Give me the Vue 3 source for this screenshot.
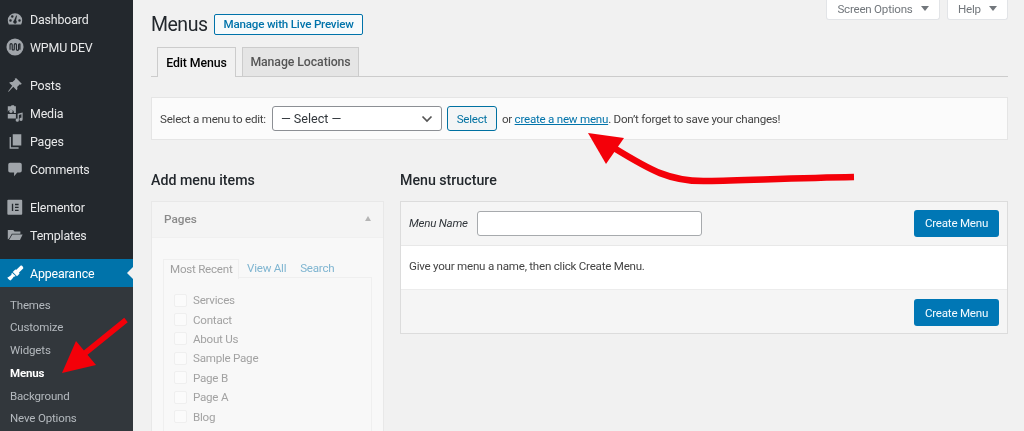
<script setup>
const groups = [
  [
    { label: 'Dashboard', d: 'M10 3.500a8 8 0 0 0-8 8c0 1.700.4 3.100 1.200 4.500h13.600c.8-1.400 1.200-2.800 1.200-4.500a8 8 0 0 0-8-8zM5 13a1.400 1.400 0 1 1 0-2.800A1.400 1.400 0 0 1 5 13zm2-4.300a1.400 1.400 0 1 1 0-2.800 1.400 1.400 0 0 1 0 2.800zM10 15.200a2.100 2.100 0 0 1-1-3.900L11.300 6l.9.300-1 5.200a2.100 2.100 0 0 1-1.200 3.700zm5-2.200a1.400 1.400 0 1 1 0-2.800 1.400 1.400 0 0 1 0 2.800z' },
    { label: 'WPMU DEV', wpmu: true }
  ],
  [
    { label: 'Posts', d: 'M11.500 2.500l6 6-1.200 1.200-.9-.5-3 3c.5 1.400.3 2.800-.6 3.700L8.100 12 3 17.500l-.7-.2L6.900 10.800 3.500 7.400c.9-.9 2.300-1.100 3.700-.6l3-3-.5-.9z' },
    { label: 'Media', d: 'M2 2.500h3.500l.7-1h2.600l.7 1h1.500v7.500H8.800a3.400 3.400 0 1 0-6.800-.5zM5.500 6a2 2 0 1 1 0 4 2 2 0 0 1 0-4zM18.500 9.500v7.500a1.800 1.800 0 1 1-1.400-1.700V11.500l-2.800.8v5.700a1.800 1.800 0 1 1-1.400-1.700V10.800zM2 11h9v5H2z' },
    { label: 'Pages', d: 'M7.500 2.500h9.500V15H7.500zM5.500 5.500V17H14v1.500H4V5.500z' },
    { label: 'Comments', d: 'M4.500 3h11a2 2 0 0 1 2 2v7a2 2 0 0 1-2 2h-3L9 18v-4H4.500a2 2 0 0 1-2-2V5a2 2 0 0 1 2-2z' }
  ],
  [
    { label: 'Elementor', elementor: true },
    { label: 'Templates', d: 'M2 4.500h6l1.500 1.500h6.500v2.500H6.500L3.500 14 2 15zM7 9.500h11.500l-3 6H3.500z' }
  ]
]
const submenu = ['Themes', 'Customize', 'Widgets', 'Menus', 'Background', 'Neve Options']
const pages = ['Services', 'Contact', 'About Us', 'Sample Page', 'Page B', 'Page A', 'Blog']
</script>

<template>
  <div class="page">
    <aside class="sidebar">
      <ul v-for="(group, g) in groups" :key="g" class="nav-group">
        <li v-for="item in group" :key="item.label" class="nav-item">
          <svg class="nav-icon" viewBox="0 0 20 20">
            <template v-if="item.wpmu">
              <circle cx="10" cy="10" r="9.500" fill="#a0a5aa" />
              <path d="M4.500 13V7.500a1.200 1.200 0 0 1 2.400 0v5a1.200 1.200 0 0 0 2.300 0v-5a1.200 1.200 0 0 1 2.400 0v5a1.200 1.200 0 0 0 2.400 0V7.500a1 1 0 0 1 1.500-.8V13" fill="none" stroke="#23282d" stroke-width="1.300" />
            </template>
            <template v-else-if="item.elementor">
              <rect x="1.500" y="2" width="16.500" height="16.500" rx="1" fill="#a0a5aa" />
              <path d="M6.500 6.500h1.500v8H6.500zM10 6.500h4V8h-4zM10 9.700h4v1.500h-4zM10 13h4v1.500h-4z" fill="#23282d" />
            </template>
            <path v-else :d="item.d" fill="#a0a5aa" fill-rule="evenodd" />
          </svg>
          <span>{{ item.label }}</span>
        </li>
      </ul>
      <div class="nav-item active">
        <svg class="nav-icon" viewBox="0 0 20 20">
          <path d="M19 3.500c-.6-1.400-1.900-2.100-2.900-1.600L11.500 6.500 10.300 6 7.500 8.800l4.700 4.700L15 10.700l-.5-1.200 4.600-4.600c.2-.3.100-1-.1-1.400zM6.700 9.800c-.5.500-.8 1.400-.7 2.200-1 1-2.700 2.600-4.500 3 .7 1.500 2 2.700 3.500 3.300 1.700-1.400 3-3 3.500-4.200.8.100 1.700-.2 2.200-.7z" fill="#fff" />
        </svg>
        <span>Appearance</span>
        <i class="notch"></i>
      </div>
      <ul class="submenu">
        <li v-for="s in submenu" :key="s" :class="{ current: s === 'Menus' }">{{ s }}</li>
      </ul>
    </aside>

    <main class="main">
      <header class="head">
        <h1>Menus</h1>
        <a class="outline-btn">Manage with Live Preview</a>
        <div class="screen-links">
          <span class="screen-tab opts">Screen Options<i class="down"></i></span>
          <span class="screen-tab help">Help<i class="down"></i></span>
        </div>
      </header>

      <nav class="tabs">
        <span class="tab on">Edit Menus</span>
        <span class="tab">Manage Locations</span>
      </nav>

      <section class="select-bar">
        <span>Select a menu to edit:</span>
        <div class="fake-select">
          <span>— Select —</span>
          <svg width="12" height="8" viewBox="0 0 12 8"><path d="M1.500 1.500L6 6l4.500-4.500" fill="none" stroke="#555" stroke-width="1.700" /></svg>
        </div>
        <span class="select-btn">Select</span>
        <span class="note">or <a>create a new menu</a>. Don’t forget to save your changes!</span>
      </section>

      <div class="columns">
        <section class="left">
          <h2>Add menu items</h2>
          <div class="panel">
            <div class="panel-head"><span>Pages</span><i class="up"></i></div>
            <div class="panel-body">
              <div class="mini-tabs">
                <span class="mini on">Most Recent</span>
                <span class="mini">View All</span>
                <span class="mini">Search</span>
              </div>
              <ul class="checks">
                <li v-for="p in pages" :key="p"><i class="box"></i>{{ p }}</li>
              </ul>
            </div>
          </div>
        </section>

        <section class="right">
          <h2>Menu structure</h2>
          <div class="menu-card">
            <div class="card-row top">
              <em>Menu Name</em>
              <div class="name-input"></div>
              <span class="primary">Create Menu</span>
            </div>
            <div class="card-mid">Give your menu a name, then click Create Menu.</div>
            <div class="card-row bottom">
              <span class="primary">Create Menu</span>
            </div>
          </div>
        </section>
      </div>
    </main>

    <svg class="arrows" width="1024" height="431" viewBox="0 0 1024 431">
      <path d="M854 177C800 178 750 180 707 181C670 182 650 170 614 148" fill="none" stroke="#f40009" stroke-width="6.500" />
      <path d="M588 133L624 138L606 164z" fill="#f40009" />
      <path d="M126 320L84 354" fill="none" stroke="#f40009" stroke-width="5.500" />
      <path d="M62 373L76 341L96 365z" fill="#f40009" />
    </svg>
  </div>
</template>

<style>
html, body { margin: 0; padding: 0; background: #f1f1f1; }
</style>

<style scoped>
* { box-sizing: border-box; }
.page {
  position: relative;
  display: flex;
  width: 1024px;
  height: 431px;
  overflow: hidden;
  background: #f1f1f1;
  color: #444;
  font-family: Roboto, "Liberation Sans", sans-serif;
  font-size: 11.600px;
  letter-spacing: -0.24px;
  white-space: nowrap;
  filter: blur(0.35px);
}
ul { list-style: none; margin: 0; padding: 0; }
h1, h2 { margin: 0; font-weight: 400; }

.sidebar {
  flex: 0 0 133px;
  padding-top: 5px;
  background: #23282d;
  color: #e8e9ea;
  font-size: 12.400px;
  letter-spacing: -0.15px;
}
.nav-group { margin-bottom: 10px; }
.nav-group:last-of-type { margin-bottom: 9.500px; }
.nav-item {
  position: relative;
  display: flex;
  align-items: center;
  height: 28px;
  padding-left: 6px;
}
.nav-item span { margin-left: 6px; padding-top: 1px; }
.nav-icon { flex: none; width: 18px; height: 18px; }
.active { background: #0073aa; color: #fff; }
.notch {
  position: absolute;
  right: 0;
  top: 8px;
  border: 6px solid transparent;
  border-right-color: #f1f1f1;
  border-left-width: 0;
}
.submenu {
  height: 145px;
  padding-top: 6.500px;
  background: #32373c;
  color: #b4b9be;
  font-size: 11.500px;
  letter-spacing: -0.15px;
}
.submenu li { height: 22.800px; padding-left: 10px; line-height: 22.800px; }
.submenu .current { color: #fff; font-weight: 700; }

.main { flex: 1; min-width: 0; padding: 0 16px 0 18px; }
.head { display: flex; align-items: flex-start; height: 47px; }
h1 { margin-top: 12px; font-size: 19.500px; letter-spacing: -0.5px; line-height: 26px; color: #23282d; }
.outline-btn {
  margin: 14px 0 0 7px;
  padding: 0 8px;
  height: 21px;
  line-height: 19px;
  border: 1px solid #0073aa;
  border-radius: 2px;
  background: #f7fafb;
  color: #0073aa;
  font-weight: 500;
  font-size: 11.600px;
  letter-spacing: -0.18px;
}
.screen-links { display: flex; gap: 7px; margin-left: auto; }
.screen-tab {
  display: flex;
  align-items: center;
  justify-content: center;
  height: 20px;
  padding-bottom: 1px;
  background: #fff;
  border: 1px solid #e2e4e7;
  border-top: 0;
  border-radius: 0 0 3px 3px;
  color: #72777c;
}
.opts { width: 114px; }
.help { width: 61px; }
.down {
  margin: -2px 0 0 8px;
  border: 4px solid transparent;
  border-top: 5px solid #72777c;
  border-bottom: 0;
}

.tabs {
  display: flex;
  align-items: flex-end;
  height: 30px;
  padding-left: 6px;
  gap: 6px;
  border-bottom: 1px solid #ccc;
}
.tab {
  display: flex;
  align-items: center;
  justify-content: center;
  height: 29px;
  width: 117px;
  background: #e5e5e5;
  border: 1px solid #ccc;
  border-bottom: 0;
  color: #555;
  font-weight: 500;
  font-size: 12.300px;
  letter-spacing: -0.08px;
}
.tab.on {
  width: 79px;
  height: 30px;
  margin-bottom: -1px;
  background: #f1f1f1;
  color: #000;
}

.select-bar {
  display: flex;
  align-items: center;
  height: 43px;
  margin-top: 20px;
  padding-left: 8px;
  background: #fbfbfb;
  border: 1px solid #e5e5e5;
  color: #444;
}
.fake-select {
  display: flex;
  align-items: center;
  justify-content: space-between;
  width: 170px;
  height: 25px;
  margin-left: 6px;
  padding: 0 8px;
  background: #fff;
  border: 1px solid #8c8f94;
  border-radius: 3px;
  color: #32373c;
  font-size: 12.600px;
  letter-spacing: 0;
}
.select-btn {
  display: flex;
  align-items: center;
  justify-content: center;
  width: 50px;
  height: 25px;
  margin-left: 5px;
  background: #f3f5f6;
  border: 1px solid #0071a1;
  border-radius: 3px;
  color: #0071a1;
}
.note { margin-left: 5px; }
.note a { color: #0073aa; text-decoration: underline; }

.columns { display: flex; margin-top: 29px; }
h2 { height: 32px; font-size: 14.200px; letter-spacing: 0; font-weight: 500; line-height: 22px; color: #23282d; }
.left { flex: 0 0 233px; margin-right: 16px; }
.right { flex: 1; min-width: 0; }

.panel { background: #f8f8f8; border: 1px solid #e8e8e8; height: 260px; }
.panel-head {
  display: flex;
  align-items: center;
  justify-content: space-between;
  height: 36px;
  padding: 0 12px 2px;
  background: #f4f4f4;
  border-bottom: 1px solid #f0f0f0;
  color: #8a8a8a;
  font-weight: 500;
  font-size: 11.800px;
  letter-spacing: 0;
}
.up {
  border: 3.500px solid transparent;
  border-bottom: 5px solid #b5b5b5;
  border-top: 0;
}
.panel-body { padding: 21px 11px 0; }
.mini-tabs { display: flex; height: 19px; border-bottom: 1px solid #efefef; }
.mini {
  margin-right: 14px;
  color: #7fb5d1;
  line-height: 19px;
}
.mini.on {
  width: 76px;
  margin-right: 8px;
  padding-left: 6px;
  height: 20px;
  background: #f8f8f8;
  border: 1px solid #efefef;
  border-bottom: 0;
  color: #a0a0a0;
}
.checks {
  height: 160px;
  padding: 12.500px 0 0 10px;
  border: 1px solid #efefef;
  border-top: 0;
  color: #a2a2a2;
}
.checks li {
  display: flex;
  align-items: center;
  height: 19.400px;
}
.box {
  width: 13px;
  height: 13px;
  margin-right: 6px;
  background: #fbfbfb;
  border: 1px solid #efefef;
  border-radius: 2px;
}

.menu-card { border: 1px solid #dcdcdc; background: #f5f5f5; height: 133px; }
.card-row {
  display: flex;
  align-items: center;
  height: 44px;
  padding: 0 8px;
}
.card-row.top { border-bottom: 1px solid #e8e8e8; padding-bottom: 1px; }
.card-row.top em { color: #32373c; }
.card-row.bottom { justify-content: flex-end; padding-top: 1px; }
.name-input {
  width: 225px;
  height: 25px;
  margin-left: 9px;
  background: #fff;
  border: 1px solid #a7aaad;
  border-radius: 3px;
}
.primary {
  display: flex;
  align-items: center;
  justify-content: center;
  width: 85px;
  height: 27px;
  margin-left: auto;
  background: #0077b5;
  border-radius: 3px;
  color: #f4fbff;
}
.card-mid {
  display: flex;
  align-items: center;
  height: 44px;
  padding: 0 0 4px 8px;
  background: #fff;
  border-bottom: 1px solid #ececec;
  color: #444;
}
.arrows { position: absolute; left: 0; top: 0; pointer-events: none; }
</style>
